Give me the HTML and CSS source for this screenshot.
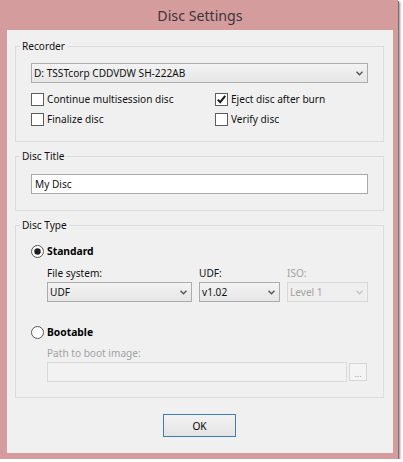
FILE: index.html
```html
<!DOCTYPE html>
<html>
<head>
<meta charset="utf-8">
<link rel="stylesheet" href="styles.css">
</head>
<body>
<div class="window">
  <div class="titlebar">Disc Settings</div>
  <div class="client">
    <div class="group g-recorder">
      <div class="legend">Recorder</div>
      <div class="combo">
        <span>D: TSSTcorp CDDVDW SH-222AB</span>
        <svg class="arrow" width="7" height="5" viewBox="0 0 7 5"><path d="M0.5 0.8 L3.5 3.8 L6.5 0.8" fill="none" stroke="#555" stroke-width="1.4"/></svg>
      </div>
      <div class="checks">
        <div class="check"><span class="box"></span><span>Continue multisession disc</span></div>
        <div class="check"><span class="box"><svg width="11" height="11" viewBox="0 0 11 11"><path d="M1.8 5.6 L4.2 8.2 L9.2 1.8" fill="none" stroke="#1a1a1a" stroke-width="2"/></svg></span><span>Eject disc after burn</span></div>
        <div class="check"><span class="box"></span><span>Finalize disc</span></div>
        <div class="check"><span class="box"></span><span>Verify disc</span></div>
      </div>
    </div>

    <div class="group g-title">
      <div class="legend">Disc Title</div>
      <div class="textbox">My Disc</div>
    </div>

    <div class="group g-type">
      <div class="legend">Disc Type</div>
      <div class="radio-row first">
        <svg width="13" height="13" viewBox="0 0 13 13"><circle cx="6.5" cy="6.5" r="6" fill="#fff" stroke="#555"/><circle cx="6.5" cy="6.5" r="3.2" fill="#1e1e1e"/></svg>
        <span>Standard</span>
      </div>
      <div class="sub">
        <div class="fields">
          <div class="field">
            <div class="field-label">File system:</div>
            <div class="combo"><span>UDF</span><svg class="arrow" width="7" height="5" viewBox="0 0 7 5"><path d="M0.5 0.8 L3.5 3.8 L6.5 0.8" fill="none" stroke="#555" stroke-width="1.4"/></svg></div>
          </div>
          <div class="field">
            <div class="field-label">UDF:</div>
            <div class="combo"><span>v1.02</span><svg class="arrow" width="7" height="5" viewBox="0 0 7 5"><path d="M0.5 0.8 L3.5 3.8 L6.5 0.8" fill="none" stroke="#555" stroke-width="1.4"/></svg></div>
          </div>
          <div class="field disabled">
            <div class="field-label">ISO:</div>
            <div class="combo"><span>Level 1</span><svg class="arrow" width="7" height="5" viewBox="0 0 7 5"><path d="M0.5 0.8 L3.5 3.8 L6.5 0.8" fill="none" stroke="#c4c4c4" stroke-width="1.4"/></svg></div>
          </div>
        </div>
      </div>
      <div class="radio-row second">
        <svg width="13" height="13" viewBox="0 0 13 13"><circle cx="6.5" cy="6.5" r="6" fill="#fff" stroke="#555"/></svg>
        <span>Bootable</span>
      </div>
      <div class="sub disabled">
        <div class="field-label path-label">Path to boot image:</div>
        <div class="path-row">
          <div class="path-input"></div>
          <div class="browse">...</div>
        </div>
      </div>
    </div>

    <div class="footer">
      <div class="btn-ok">OK</div>
    </div>
  </div>
</div>
</body>
</html>
```

FILE: styles.css
```css
body {
  margin: 0;
  background: #fff;
  font-family: "Noto Sans", "Open Sans", sans-serif;
  font-size: 10.1px;
  color: #111;
}

.window {
  width: 398px;
  height: 459px;
  background: #d59c9e;
  display: flex;
  flex-direction: column;
  box-shadow: 1px 1px 0 #7d6e6f, 2px 2px 2px rgba(0, 0, 0, 0.45);
}

.titlebar {
  height: 30px;
  display: flex;
  align-items: center;
  justify-content: center;
  font-size: 14.2px;
  color: #3d3537;
  padding-left: 2px;
}

.client {
  flex: 1;
  margin: 0 5px 6px 7px;
  background: #f0f0f0;
  padding: 16px 9px 0 8px;
  display: flex;
  flex-direction: column;
}

.group {
  border: 1px solid #dcdcdc;
  display: flex;
  flex-direction: column;
  padding: 0 15px;
}

.legend {
  align-self: flex-start;
  margin: -8px 0 0 -11px;
  padding: 0 2px;
  background: #f0f0f0;
  height: 14px;
  line-height: 14px;
}

.combo {
  height: 20px;
  box-sizing: border-box;
  border: 1px solid #acacac;
  background: linear-gradient(#f3f3f3, #e6e6e6);
  display: flex;
  align-items: center;
  justify-content: space-between;
  padding: 0 4px 0 2px;
}

.arrow {
  flex: none;
}

.g-recorder {
  padding-bottom: 12px;
}

.g-recorder .combo {
  margin-top: 10px;
}

.checks {
  display: grid;
  grid-template-columns: 184px 1fr;
  grid-auto-rows: 20px;
  margin-top: 6px;
}

.check {
  display: flex;
  align-items: center;
  gap: 3px;
}

.box {
  width: 13px;
  height: 13px;
  box-sizing: border-box;
  border: 1px solid #5c5c5c;
  background: #fff;
  flex: none;
  display: flex;
  align-items: center;
  justify-content: center;
}

.g-title {
  margin-top: 14px;
  padding-bottom: 16px;
}

.textbox {
  margin-top: 11px;
  height: 20px;
  box-sizing: border-box;
  border: 1px solid #a9a9a9;
  background: #fff;
  padding-left: 3px;
  display: flex;
  align-items: center;
}

.g-type {
  margin-top: 14px;
  padding-bottom: 15px;
}

.radio-row {
  display: flex;
  align-items: center;
  gap: 3px;
  height: 16px;
  font-weight: bold;
  font-size: 10.3px;
  color: #000;
}

.radio-row.first {
  margin-top: 11px;
}

.radio-row.second {
  margin-top: 22px;
}

.sub {
  padding-left: 16px;
}

.fields {
  display: grid;
  grid-template-columns: 145px 81px 81px;
  column-gap: 7px;
  margin-top: 7px;
}

.field-label {
  height: 14px;
  line-height: 14px;
  margin-bottom: 2px;
}

.disabled {
  color: #a2a2a2;
}

.disabled .combo {
  border-color: #d9d9d9;
  background: #efefef;
}

.path-label {
  margin-top: 6px;
  margin-bottom: 0;
}

.path-row {
  display: flex;
  align-items: center;
  gap: 2px;
  margin-top: 2px;
}

.path-input {
  width: 300px;
  height: 20px;
  box-sizing: border-box;
  border: 1px solid #d9d9d9;
  background: #f2f2f2;
}

.browse {
  width: 18px;
  height: 18px;
  box-sizing: border-box;
  border: 1px solid #d5d5d5;
  background: #f4f4f4;
  display: flex;
  align-items: center;
  justify-content: center;
  font-size: 9px;
  line-height: 1;
  color: #9a9a9a;
  padding-top: 2px;
}

.footer {
  display: flex;
  justify-content: center;
  margin-top: 16px;
}

.btn-ok {
  width: 73px;
  height: 23px;
  box-sizing: border-box;
  border: 1px solid #3c7fb1;
  background: linear-gradient(#f2f2f2, #e4e4e4);
  display: flex;
  align-items: center;
  justify-content: center;
  color: #000;
}
```
